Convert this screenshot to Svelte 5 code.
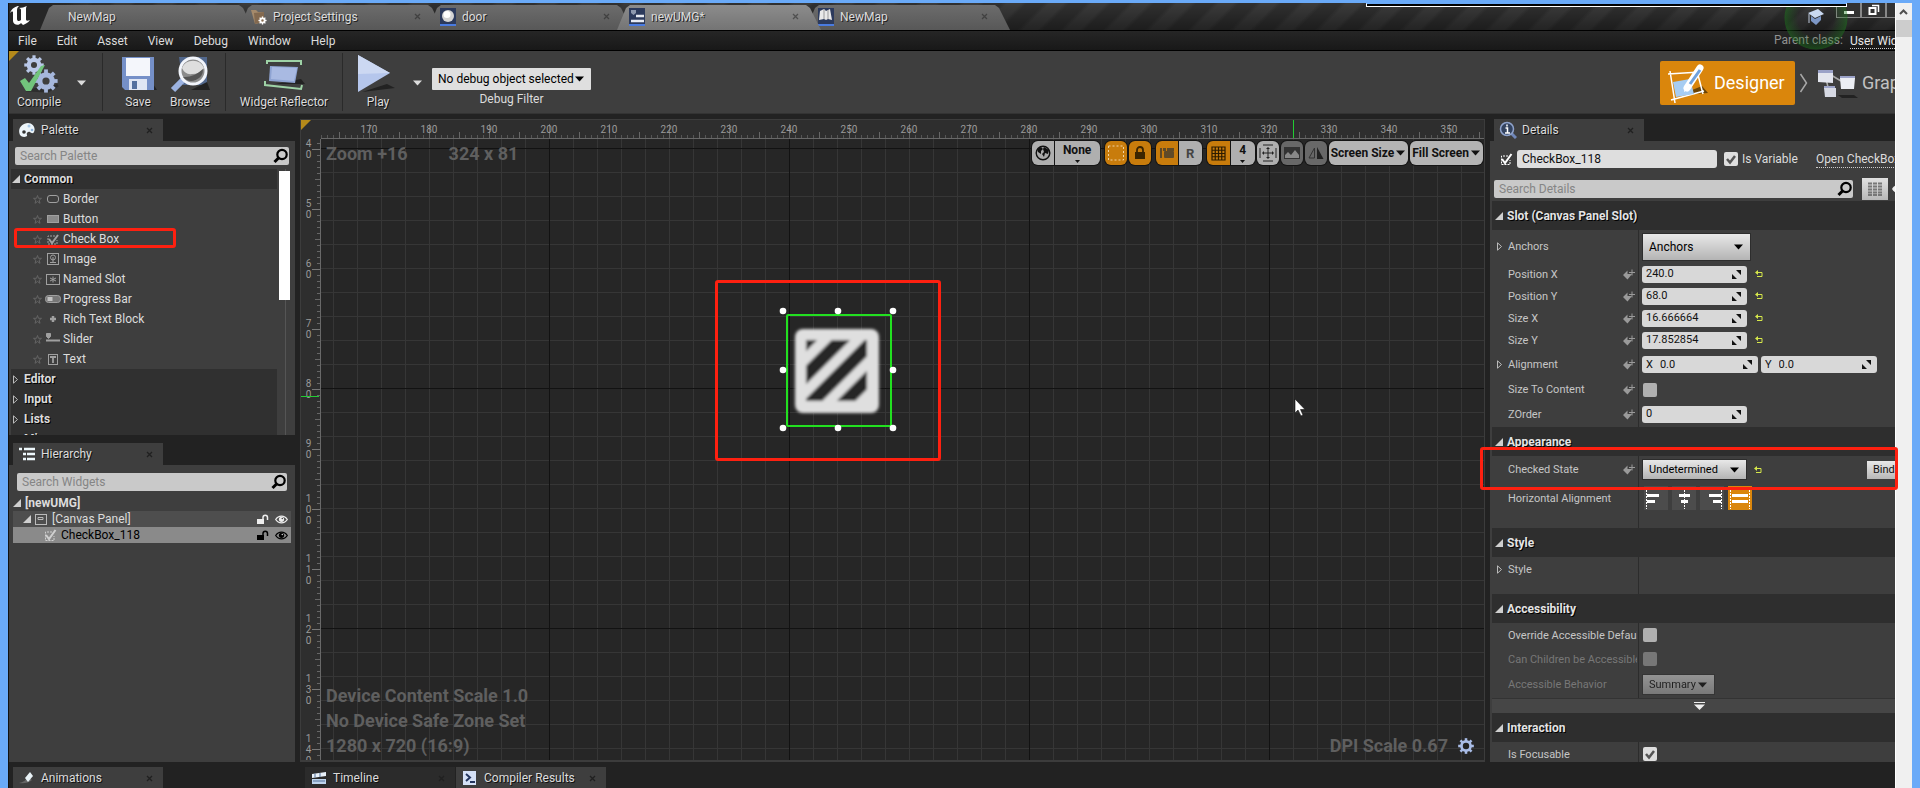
<script>
  const tabs = [
    { name: 'NewMap', icon: '' },
    { name: 'Project Settings', icon: 'settings' },
    { name: 'door', icon: 'ball' },
    { name: 'newUMG*', icon: 'umg', active: true },
    { name: 'NewMap', icon: 'map' }
  ];
  const menus = ['File', 'Edit', 'Asset', 'View', 'Debug', 'Window', 'Help'];
  const widgets = ['Border', 'Button', 'Check Box', 'Image', 'Named Slot', 'Progress Bar', 'Rich Text Block', 'Slider', 'Text'];
  const groups = ['Editor', 'Input', 'Lists', 'Misc'];
  const across = Array.from({ length: 19 }, (_, i) => 170 + i * 10);
  const down = Array.from({ length: 11 }, (_, i) => 40 + i * 10);
  const numbers = [
    { id: 'px', label: 'Position X', value: '240.0' },
    { id: 'py', label: 'Position Y', value: '68.0' },
    { id: 'sx', label: 'Size X', value: '16.666664' },
    { id: 'sy', label: 'Size Y', value: '17.852854' }
  ];
  const handles = [[4, 4], [59, 4], [114, 4], [4, 63], [114, 63], [4, 121], [59, 121], [114, 121]];
  const teeth = [0, 45, 90, 135, 180, 225, 270, 315];
</script>

{#snippet gear(cx, cy, r, fill)}
  <g {fill}>
    {#each teeth as t}
      <rect x={cx - r * 0.22} y={cy - r * 1.35} width={r * 0.44} height={r * 0.6} transform="rotate({t} {cx} {cy})" />
    {/each}
  </g>
  <circle {cx} {cy} r={r * 0.72} fill="none" stroke={fill} stroke-width={r * 0.6} />
{/snippet}

{#snippet lens()}
  <svg class="lens" width="16" height="16" viewBox="0 0 16 16" aria-hidden="true">
    <circle cx="9" cy="6.500" r="4.700" fill="none" stroke="#000" stroke-width="2.200" />
    <path d="M5.500 10 1.500 14" stroke="#000" stroke-width="3" />
  </svg>
{/snippet}

{#snippet caret()}
  <svg class="caret" width="9" height="6" viewBox="0 0 9 6" aria-hidden="true"><path d="M0 0.500h9L4.500 5.500z" fill="currentColor" /></svg>
{/snippet}

{#snippet opened()}
  <svg width="8" height="8" viewBox="0 0 8 8" aria-hidden="true"><path d="M8 0v8H0z" fill="#cfcfcf" /></svg>
{/snippet}

{#snippet closed()}
  <svg width="8" height="9" viewBox="0 0 8 9" aria-hidden="true"><path d="M1.500 .8 5.500 4.500 1.500 8.200z" fill="none" stroke="#bbb" /></svg>
{/snippet}

{#snippet close()}
  <svg class="close" width="7" height="7" viewBox="0 0 7 7" aria-hidden="true"><path d="M1 1 6 6M6 1 1 6" stroke="#202020" stroke-width="1.300" /></svg>
{/snippet}

{#snippet checkbox(color)}
  <svg width="14" height="13" viewBox="0 0 14 13" aria-hidden="true">
    <path d="M9 3H2.500v8.500H11V7" fill="none" stroke={color} stroke-dasharray="2 1" />
    <path d="M3 6 6 10 12.500 1" fill="none" stroke={color} stroke-width="2" />
  </svg>
{/snippet}

{#snippet key()}
  <svg class="key" width="12" height="11" viewBox="0 0 12 11" aria-hidden="true">
    <path d="M0 6 4.500 1.500V5H9L4.500 10.500z" fill="#9a9a9a" /><path d="M6 3.500h6M9 .5v6" stroke="#9a9a9a" />
  </svg>
{/snippet}

{#snippet spin()}
  <svg class="spin" width="9" height="9" viewBox="0 0 9 9" aria-hidden="true"><path d="M4 0h5v5zM0 4v5h5z" fill="#111" /></svg>
{/snippet}

{#snippet reset()}
  <button class="reset" aria-label="Reset to default">
    <svg width="8" height="8" viewBox="0 0 8 8" aria-hidden="true"><path d="M0 2.500 3 0v5z" fill="#d6e84a" /><path d="M2 2.500h5v4H2" fill="none" stroke="#d6e84a" /></svg>
  </button>
{/snippet}

{#snippet widgetIcon(name)}
  <svg width="18" height="14" viewBox="0 0 18 14" fill="none" stroke="#a0a0a0" aria-hidden="true">
    {#if name === 'Border'}
      <rect x="3.500" y="3.500" width="11" height="7" rx="2.500" />
    {:else if name === 'Button'}
      <rect x="3.500" y="3.500" width="11" height="7" fill="#8a8a8a" />
    {:else if name === 'Check Box'}
      <path d="M11 4H4v8h9V8" stroke-dasharray="2 1" /><path d="M5 7l3 4 6-8" stroke-width="2" />
    {:else if name === 'Image'}
      <rect x="3.500" y="1.500" width="11" height="11" /><circle cx="9" cy="5.500" r="2.500" /><path d="M9 5v6M6 10.500h6" />
    {:else if name === 'Named Slot'}
      <rect x="2.500" y="2.500" width="13" height="10" /><path d="M9 4.500v6M6 6l6 3M12 6 6 9" />
    {:else if name === 'Progress Bar'}
      <rect x="1.500" y="3.500" width="15" height="7" rx="3" fill="#777" /><path d="M3.500 7h5" stroke="#c4c4c4" stroke-width="4" />
    {:else if name === 'Rich Text Block'}
      <path d="M9 4v6M6 7h6" stroke-width="2.500" />
    {:else if name === 'Slider'}
      <path d="M2 8.500h14" stroke-width="2" /><path d="M2.500 1.500h4v3l-2 2-2-2z" fill="#a0a0a0" />
    {:else}
      <rect x="4.500" y="2.500" width="9" height="10" /><path d="M6 5h6M9 5v6" stroke-width="1.800" />
    {/if}
  </svg>
{/snippet}

{#snippet lock(color)}
  <svg class="lock" width="13" height="11" viewBox="0 0 13 11" aria-hidden="true"><path d="M1 5h7v5H1z" fill={color} /><path d="M7 6V3.500a2 2 0 0 1 4.500 0V6" fill="none" stroke={color} stroke-width="1.500" /></svg>
{/snippet}

{#snippet eye(color, pupil)}
  <svg width="13" height="9" viewBox="0 0 13 9" aria-hidden="true"><path d="M.7 4.500C3.500 0 9.500 0 12.300 4.500 9.500 9 3.500 9 .7 4.500z" fill="none" stroke={color} stroke-width="1.300" /><circle cx="6.500" cy="4.300" r="2.600" fill={color} /><circle cx="7.300" cy="3.500" r=".8" fill={pupil} /></svg>
{/snippet}

<div class="frame">
  <div class="app">
    <header class="title">
      <svg class="logo" width="24" height="22" viewBox="0 0 24 22" aria-hidden="true">
        <path d="M1 8C3 3 7 1 10 1 8 3 8 4 8 6v8c0 2 2 3 4 1V5c0-1-1-2-2-2 3 0 5-1 8-2-1 1-1 2-1 4v9c0 2 1 2 4 1-2 3-5 4-7 5l-2-2c-2 3-8 2-8-2V7C3 6 2 7 1 8z" fill="#fff" />
      </svg>
      <nav class="tabs" aria-label="Open assets">
        {#each tabs as tab}
          <a class="tab" class:active={tab.active} class:wide={!tab.icon} href="#tab">
            {#if tab.icon}
              <svg width="18" height="18" viewBox="0 0 18 18" aria-hidden="true">
                {#if tab.icon === 'settings'}
                  <path d="M1 2h5l2 2h6v10L5 16z" fill="#a58a6b" /><path d="M4 5 14 4v9l-9 3z" fill="#83694f" />
                  {@render gear(12.5, 12.5, 3, '#fff')}
                {:else}
                  <rect x="1" width="16" height="16" fill="#2c3a5c" /><path d="M1 17h16" stroke="#4a7be0" stroke-width="2" />
                  {#if tab.icon === 'ball'}
                    <circle cx="9" cy="8" r="6" fill="#d4d4d4" /><circle cx="8" cy="6.500" r="3.500" fill="#fff" />
                  {:else if tab.icon === 'umg'}
                    <path d="M3 2h5v3L5.500 7 3 5z" fill="#8d98ae" /><path d="M8 8h8M3 13h13" stroke="#e6eaf2" stroke-width="2.500" />
                  {:else}
                    <path d="M3 3l4-2 2 2 4-2 2 11-4-1-2 1-2-1-5 1z" fill="#e9e9e9" /><path d="M7 1v10M11 2v9" stroke="#999" />
                  {/if}
                {/if}
              </svg>
            {/if}
            <span>{tab.name}</span>
            {#if tab.icon}{@render close()}{/if}
          </a>
        {/each}
      </nav>
      <div class="windowbuttons">
        <button aria-label="Minimize"><svg width="24" height="15" viewBox="0 0 24 15"><path d="M7 9.500h10" stroke="#fff" stroke-width="3" /></svg></button>
        <button aria-label="Restore"><svg width="24" height="15" viewBox="0 0 24 15" fill="none" stroke="#fff"><path d="M10 2.500h6.500V9" stroke-width="1.500" /><rect x="7.500" y="5" width="6" height="6" stroke-width="2" /></svg></button>
        <button aria-label="Close"></button>
      </div>
    </header>

    <nav class="menu" aria-label="Main menu">
      {#each menus as m}<button>{m}</button>{/each}
      <div class="parent"><span>Parent class:</span><a href="#class">User Widget</a></div>
    </nav>

    <div class="glow">
      <svg width="20" height="20" viewBox="0 0 20 20" aria-hidden="true"><path d="M2 6 12 2l6 5-9 4z" fill="#c9d8f0" /><path d="M5 9v5l5 4 5-5V9l-6 3z" fill="#7d97c6" /><path d="M3 7v9" stroke="#bcc7da" /></svg>
    </div>
    <div class="remote"></div>

    <div class="toolbar">
      <button class="tool compile">
        <svg width="42" height="40" viewBox="0 0 42 40" aria-hidden="true">
          <path d="M8 36 30 37 40 31" stroke="#222" stroke-width="3" opacity=".6" />
          {@render gear(16, 11, 7.2, '#b9c8e8')}{@render gear(28, 27, 8.6, '#a6b7dc')}
          <path d="M2 27 7 24 11 29 23 12l4-1L13 37H8z" fill="#72c47c" />
        </svg>
        Compile
      </button>
      <button class="drop" aria-label="Compile options">{@render caret()}</button>
      <i class="sep"></i>
      <button class="tool">
        <svg width="42" height="40" viewBox="0 0 42 40" aria-hidden="true">
          <path d="M36 30l4 6H10z" fill="#222" /><path d="M5 3h32v33H8l-3-3z" fill="#7590c8" /><rect x="9" y="4" width="24" height="18" fill="#f4f6fb" /><path d="M12 25h18v11H12z" fill="#dfe6f4" /><rect x="15" y="27" width="5" height="8" fill="#54709f" />
        </svg>
        Save
      </button>
      <button class="tool">
        <svg width="42" height="40" viewBox="0 0 42 40" aria-hidden="true">
          <path d="M10 3h28v28H14z" fill="#52688d" /><path d="M38 28l3 8H22z" fill="#222" /><path d="M14 26 4 36" stroke="#9bb2e0" stroke-width="6" /><circle cx="24" cy="17" r="13" fill="#8c8c8c" stroke="#f2f5fb" stroke-width="3" /><path d="M13 14a12 12 0 0 1 22 0q-4 6-12 6-7 1-10-6z" fill="#dedede" /><path d="M14 23q10 1 20-8a11.500 11.500 0 0 1-20 8z" fill="#555" />
        </svg>
        Browse
      </button>
      <i class="sep"></i>
      <button class="tool reflector">
        <svg width="42" height="40" viewBox="0 0 42 40" aria-hidden="true">
          <path d="M12 30h30l-4-5z" fill="#222" /><path d="M7 12 35 13 32 29 6 27z" fill="#8ea3d2" /><path d="M9 13 34 14 31 27 8 25z" fill="#a9bae2" /><path d="M4 10V7h34v4M2 27v4l36 4 1-4" fill="none" stroke="#9ed2a6" stroke-width="2" />
        </svg>
        Widget Reflector
      </button>
      <i class="sep"></i>
      <button class="tool play">
        <svg width="42" height="40" viewBox="0 0 42 40" aria-hidden="true"><path d="M5 38 38 34 30 30z" fill="#222" /><path d="M1 1 33 19 1 38z" fill="#b5c6ec" /><path d="M1 1 33 19 1 20z" fill="#ccd8f2" /></svg>
        Play
      </button>
      <button class="drop" aria-label="Play options">{@render caret()}</button>
      <div class="debug">
        <div class="pick"><select id="debug"><option>No debug object selected</option></select>{@render caret()}</div>
        <label for="debug">Debug Filter</label>
      </div>
      <div class="modes">
        <button class="designer">
          <svg width="42" height="42" viewBox="0 0 42 42" aria-hidden="true">
            <path d="M14 33 42 31 36 24z" fill="#6b4406" /><path d="M2 12 34 10M4 9 9 41M31 9 37 32M5 38 38 29" stroke="#fff" stroke-width="1.500" /><path d="M7 20 24 17 28 32 10 35z" fill="#a7cdf2" /><path d="M21 26 34 6" stroke="#fff" stroke-width="7" stroke-linecap="round" /><path d="M24 22 34 8" stroke="#6fa1dc" stroke-width="3" /><path d="M18 30l1-7 6 3z" fill="#fff" />
          </svg>
          Designer
        </button>
        <svg width="10" height="20" viewBox="0 0 10 20" aria-hidden="true"><path d="M1.500 1 7.500 10 1.500 19" fill="none" stroke="#a8a8a8" stroke-width="1.500" /></svg>
        <button class="graph">
          <svg width="42" height="32" viewBox="0 0 42 32" aria-hidden="true">
            <path d="M22 28h16l4 3H26z" fill="#222" /><path d="M15 8 25 14M10 12 12 20" stroke="#aaa" stroke-width="1.500" /><path d="M2 3 17 4 17 16 2 15z" fill="#e3e5ee" /><path d="M2 3h15v3H2zM24 9h15v3H24zM8 19h11v3H8z" fill="#9ba2c8" /><path d="M24 11h15l-1 11H25z" fill="#eceef4" /><path d="M8 21h12v9H9z" fill="#d6d9e3" />
          </svg>
          Graph
        </button>
      </div>
    </div>

    <main class="body">
      <div class="left">
        <section class="dock palette">
          <div class="docktab">
            <svg width="18" height="16" viewBox="0 0 18 16" aria-hidden="true"><path d="M2 13C-1 7 4 1 10 1c5 0 8 5 6 9-1 2-3 1-4 0-2-1-4 1-3 3s-5 3-7 0z" fill="#edf5fa" /><circle cx="6" cy="10" r="1.800" fill="#333" /><circle cx="11" cy="4" r="1.500" fill="#a8c9e8" /><circle cx="14" cy="8" r="1.300" fill="#8fb4dd" /></svg>
            <span>Palette</span>{@render close()}
          </div>
          <div class="panel">
            <div class="search"><input type="text" aria-label="Search Palette" placeholder="Search Palette" />{@render lens()}</div>
            <div class="scroller">
              <div class="list">
                <button class="group lit">{@render opened()}Common</button>
                {#each widgets as w}
                  <div class="item">
                    <svg width="9" height="9" viewBox="0 0 9 9" aria-hidden="true"><path d="M4.500 .5 5.500 3.300H8.500L6.200 5.200 7 8.300 4.500 6.500 2 8.300 2.800 5.200 .5 3.300H3.500z" fill="none" stroke="#646464" /></svg>
                    {@render widgetIcon(w)}<span>{w}</span>
                    {#if w === 'Check Box'}<div class="mark"></div>{/if}
                  </div>
                {/each}
                {#each groups as g}<button class="group">{@render closed()}{g}</button>{/each}
              </div>
              <div class="bar"><i></i></div>
            </div>
          </div>
        </section>
        <section class="dock hierarchy">
          <div class="docktab">
            <svg width="18" height="16" viewBox="0 0 18 16" aria-hidden="true"><path d="M1 3h3M6 3h11M5 8h3M9 8h8M5 13h3M9 13h8" stroke="#eef8fc" stroke-width="2.500" /></svg>
            <span>Hierarchy</span>{@render close()}
          </div>
          <div class="panel">
            <div class="search"><input type="text" aria-label="Search Widgets" placeholder="Search Widgets" />{@render lens()}</div>
            <div class="tree">
              <div class="node root">{@render opened()}<b>[newUMG]</b></div>
              <div class="node canvasnode">
                {@render opened()}
                <svg width="13" height="13" viewBox="0 0 13 13" fill="none" stroke="#bbb" aria-hidden="true"><rect x=".5" y="1.500" width="11" height="10" /><path d="M3 4.500h5v2H3z" /></svg>
                <span>[Canvas Panel]</span>{@render lock('#eee')}{@render eye('#eee', '#444')}
              </div>
              <div class="node selected">{@render checkbox('#d0d0d0')}<span>CheckBox_118</span>{@render lock('#000')}{@render eye('#000', '#ccc')}</div>
            </div>
          </div>
        </section>
      </div>

      <section class="viewport">
        <div class="corner"></div>
        <div class="ruler top">
          {#each across as n}<span>{n}</span>{/each}
          <i class="at x"></i>
        </div>
        <div class="ruler side">
          {#each down as n}<span>{#each String(n).split('') as d}<em>{d}</em>{/each}</span>{/each}
          <i class="at y"></i>
        </div>
        <div class="surface">
          <div class="overlaybar">
            <div class="readout"><span>Zoom +16</span><span>324 x 81</span></div>
            <div class="pills">
              <button class="pill globe" aria-label="Localization"><svg width="16" height="16" viewBox="0 0 16 16"><circle cx="8" cy="8" r="6.800" fill="#aaa" stroke="#111" stroke-width="1.400" /><path d="M2 4l4-2 2 2-2 2v3L3 7zM9 2l5 3-1 4-3-1-1 4-2-3 2-2-1-3z" fill="#111" /></svg></button>
              <button class="pill none">None<svg width="5" height="3" viewBox="0 0 5 3"><path d="M0 0h5L2.500 3z" fill="#111" /></svg></button>
              <button class="pill on" aria-label="Show outlines"><svg width="18" height="18" viewBox="0 0 18 18"><rect x="1.500" y="2" width="15" height="14" fill="none" stroke="#f1d3a3" stroke-dasharray="2 2" /></svg></button>
              <button class="pill on" aria-label="Respect locks"><svg width="16" height="16" viewBox="0 0 16 16"><rect x="3" y="7" width="10" height="7" fill="#3b2500" /><path d="M5 8V5a3 3 0 0 1 6 0v3" fill="none" stroke="#3b2500" stroke-width="1.800" /></svg></button>
              <button class="pill on joinl" aria-label="Layout mode"><svg width="16" height="14" viewBox="0 0 16 14" fill="#5f4a28"><path d="M1 2h2v10H1zM4 2h3v3H4z" /><rect x="5" y="5" width="10" height="7" rx="1" /><path d="M8 2h7v3H8z" /></svg></button>
              <button class="pill joinr big">R</button>
              <button class="pill on joinl" aria-label="Grid snap"><svg width="15" height="15" viewBox="0 0 15 15"><path d="M1 1h13v13H1zM4.250 1v13M7.500 1v13M10.750 1v13M1 4.250h13M1 7.500h13M1 10.750h13" fill="none" stroke="#2d1c00" stroke-width="1.200" /></svg></button>
              <button class="pill joinr none four">4<svg width="5" height="3" viewBox="0 0 5 3"><path d="M0 0h5L2.500 3z" fill="#111" /></svg></button>
              <button class="pill" aria-label="Zoom to fit"><svg width="18" height="18" viewBox="0 0 18 18" fill="none" stroke="#222"><path d="M9 4v10M4 9h10M1 4v10M17 4v10M4 1h10M4 17h10" /><path d="M9 3l2 2H7zM9 15l2-2H7zM3 9l2-2v4zM15 9l-2-2v4z" fill="#222" stroke="none" /></svg></button>
              <button class="pill off" aria-label="Preview background"><svg width="16" height="12" viewBox="0 0 16 12"><path d="M0 0h16v12H0z" fill="#333" /><path d="M1 11V8l3-3 3 3 4-5 4 5v3z" fill="#888" /></svg></button>
              <button class="pill off" aria-label="Flip direction"><svg width="16" height="14" viewBox="0 0 16 14"><path d="M6.500 2v10H1z" fill="none" stroke="#333" /><path d="M9 1v12h6.500z" fill="#222" /></svg></button>
              <button class="pill text">Screen Size{@render caret()}</button>
              <button class="pill text">Fill Screen{@render caret()}</button>
            </div>
          </div>
          <div class="info">
            <div><p>Device Content Scale 1.0</p><p>No Device Safe Zone Set</p><p>1280 x 720 (16:9)</p></div>
            <div class="dpi"><p>DPI Scale 0.67</p><svg width="18" height="18" viewBox="0 0 18 18" aria-hidden="true">{@render gear(9, 9, 5.8, '#a9bce6')}<circle cx="9" cy="9" r="3.200" fill="#222" /></svg></div>
          </div>
          <svg class="selection" width="118" height="125" viewBox="0 0 118 125" aria-hidden="true">
            <defs>
              <filter id="soft"><feGaussianBlur stdDeviation="1.500" /></filter>
              <clipPath id="inner"><rect x="27" y="33" width="61" height="61" /></clipPath>
            </defs>
            <g filter="url(#soft)">
              <rect x="16" y="22" width="84" height="84" rx="8" fill="#dfdfdf" />
              <g clip-path="url(#inner)" stroke="#262626" stroke-width="13">
                <path d="M17 45 39 23M17 78 72 23M17 111 105 23M17 144 138 23" />
              </g>
            </g>
            <rect x="8" y="8" width="104" height="111" rx="1" fill="none" stroke="#22e020" stroke-width="2" />
            {#each handles as [x, y]}<circle cx={x} cy={y} r="3.300" fill="#fff" />{/each}
          </svg>
          <div class="mark stage"></div>
          <svg class="cursor" width="12" height="19" viewBox="0 0 12 19" aria-hidden="true"><path d="M1 1v14l3-3 3 6 2-1-2.500-5.500H11z" fill="#fff" stroke="#111" stroke-width=".6" /></svg>
        </div>
      </section>

      <section class="dock details">
        <div class="docktab">
          <svg width="18" height="18" viewBox="0 0 18 18" aria-hidden="true"><path d="M12 12l5 5" stroke="#6f86b8" stroke-width="3" /><circle cx="8" cy="8" r="6.500" fill="#33435f" stroke="#8fa3cc" stroke-width="1.500" /><path d="M8 3.500v2M6.500 7H8.500v5M6 12h5" stroke="#fff" stroke-width="1.500" fill="none" /></svg>
          <span>Details</span>{@render close()}
        </div>
        <div class="panel">
          <div class="name">
            {@render checkbox('#fff')}
            <input type="text" aria-label="Widget name" value="CheckBox_118" />
            <input type="checkbox" id="isvar" checked /><label for="isvar">Is Variable</label>
            <a href="#open">Open CheckBox</a>
          </div>
          <div class="find">
            <div class="search"><input type="text" aria-label="Search Details" placeholder="Search Details" />{@render lens()}</div>
            <button class="matrix" aria-label="Property matrix"><svg width="14" height="14" viewBox="0 0 14 14"><path d="M0 1.500h14M0 4.500h14M0 7.500h14M0 10.500h14M0 13h14" stroke="#777" stroke-width="2" stroke-dasharray="4 1" /></svg></button>
            <button class="view" aria-label="View options"><svg width="16" height="10" viewBox="0 0 16 10"><path d="M0 5c3-6 13-6 16 0-3 6-13 6-16 0z" fill="#eee" /></svg></button>
          </div>
          <div class="props">
            <h2>{@render opened()}Slot (Canvas Panel Slot)</h2>
            <div class="row anchors"><span class="exp">{@render closed()}</span><label for="anchors">Anchors</label><div class="val"><div class="pick light tall"><select id="anchors"><option>Anchors</option></select>{@render caret()}</div></div></div>
            {#each numbers as n}
              <div class="row num"><label for={n.id}>{n.label}</label>{@render key()}<div class="val"><div class="field"><input id={n.id} type="text" value={n.value} />{@render spin()}</div>{@render reset()}</div></div>
            {/each}
            <div class="row pair"><span class="exp">{@render closed()}</span><label for="ax">Alignment</label>{@render key()}<div class="val">
              <div class="field long"><label for="ax">X</label><input id="ax" type="text" value="0.0" />{@render spin()}</div>
              <div class="field long"><label for="ay">Y</label><input id="ay" type="text" value="0.0" />{@render spin()}</div>
            </div></div>
            <div class="row fit"><label for="stc">Size To Content</label>{@render key()}<div class="val"><input type="checkbox" id="stc" /></div></div>
            <div class="row order"><label for="zo">ZOrder</label>{@render key()}<div class="val"><div class="field"><input id="zo" type="text" value="0" />{@render spin()}</div></div></div>

            <h2>{@render opened()}Appearance</h2>
            <div class="row pair"><label for="state">Checked State</label>{@render key()}<div class="val"><div class="pick light state"><select id="state"><option>Undetermined</option></select>{@render caret()}</div>{@render reset()}<button class="bind">Bind</button></div></div>
            <div class="row halign"><span class="lab">Horizontal Alignment</span><div class="val">
              <button aria-label="Left"><svg width="24" height="24" viewBox="0 0 24 24" stroke="#fff"><path d="M2.500 1v22" stroke-dasharray="2 1" /><path d="M3 9.500h12M3 15.500h8" stroke-width="3" /></svg></button>
              <button aria-label="Center"><svg width="24" height="24" viewBox="0 0 24 24" stroke="#fff"><path d="M12.500 1v22" stroke-dasharray="2 1" /><path d="M7 9.500h11M9 15.500h7" stroke-width="3" /></svg></button>
              <button aria-label="Right"><svg width="24" height="24" viewBox="0 0 24 24" stroke="#fff"><path d="M21.500 1v22" stroke-dasharray="2 1" /><path d="M9 9.500h12M13 15.500h8" stroke-width="3" /></svg></button>
              <button class="on" aria-label="Fill"><svg width="24" height="24" viewBox="0 0 24 24" stroke="#fff"><path d="M2.500 1v22M21.500 1v22" stroke-dasharray="2 1" /><path d="M4 9.500h16M4 15.500h16" stroke-width="3" /></svg></button>
            </div></div>

            <h2>{@render opened()}Style</h2>
            <div class="row styled"><span class="exp">{@render closed()}</span><span class="lab">Style</span><div class="val"></div></div>

            <h2>{@render opened()}Accessibility</h2>
            <div class="row"><label for="oad">Override Accessible Defaults</label><div class="val"><input type="checkbox" id="oad" /></div></div>
            <div class="row dim"><label for="ccb">Can Children be Accessible</label><div class="val"><input type="checkbox" id="ccb" disabled /></div></div>
            <div class="row dim pair"><label for="beh">Accessible Behavior</label><div class="val"><div class="pick light beh"><select id="beh" disabled><option>Summary</option></select>{@render caret()}</div></div></div>
            <button class="more" aria-label="Show advanced"><svg width="11" height="8" viewBox="0 0 11 8"><path d="M0 .5h11" stroke="#eee" /><path d="M0 2.500h11L5.500 8z" fill="#eee" /></svg></button>

            <h2>{@render opened()}Interaction</h2>
            <div class="row"><label for="foc">Is Focusable</label><div class="val"><input type="checkbox" id="foc" checked /></div></div>
          </div>
        </div>
      </section>
    </main>

    <footer>
      <div class="docktab anim"><svg width="18" height="14" viewBox="0 0 18 14" aria-hidden="true"><path d="M1 12q6-1 9-6l4 3q-5 4-13 3z" fill="#666" /><path d="M7 7 12 1l3 4-5 6z" fill="#e8f2f6" /></svg><span>Animations</span>{@render close()}</div>
      <div class="docktab time"><svg width="18" height="14" viewBox="0 0 18 14" aria-hidden="true"><path d="M2 3 16 1v4L2 7z" fill="#e8f1fa" /><path d="M2 8h14v5H2z" fill="#bcd3ec" /><path d="M5 2.500v4M10 2v4M3 10h12" stroke="#547199" /></svg><span>Timeline</span>{@render close()}</div>
      <div class="docktab"><svg width="18" height="16" viewBox="0 0 18 16" aria-hidden="true"><path d="M2 1h13v14H2z" fill="#d5e1f7" /><path d="M5 4l4 3.500L5 11M9 12h5" fill="none" stroke="#24355f" stroke-width="2" /></svg><span>Compiler Results</span>{@render close()}</div>
    </footer>
    <div class="mark checked"></div>
  </div>
  <div class="pagebar"><svg width="15" height="17" viewBox="0 0 15 17" aria-hidden="true"><path d="M4 11 7.500 7.500 11 11" fill="none" stroke="#505050" stroke-width="2" /></svg><i></i></div>
</div>

<style>
  :global(body) { background: #6aaaf8; }
  * { box-sizing: border-box; }
  button, input, select { font: inherit; color: inherit; border: 0; margin: 0; padding: 0; background: none; border-radius: 0; }
  button { display: flex; align-items: center; }
  a { color: inherit; text-decoration: none; }
  svg { flex: none; display: block; }
  p, h2 { margin: 0; }
  .frame { height: 100vh; display: flex; padding: 3px 8px 0 8px; background: #6aaaf8; font: 12px/16px Roboto, sans-serif; color: #dcdcdc; overflow: hidden; }
  .app { position: relative; flex: 1; min-width: 0; display: grid; grid-template-rows: 28px 20px 63px 5px minmax(0, 1fr) 5px 21px; background: #222; border-left: 1px solid #111; }
  .pagebar { width: 17px; background: #f0f0f0; border-left: 1px solid #fff; }
  .pagebar i { display: block; height: 17px; background: #cdcdcd; }

  .title { display: flex; background: linear-gradient(90deg, #262626 40px, transparent 90px), linear-gradient(transparent, #0006), repeating-linear-gradient(135deg, #303030 0 12px, #3b3b3b 16px 26px, #303030 30px); border-bottom: 1px solid #000; overflow: hidden; }
  .logo { margin: 2px 13px 0 0; }
  .tabs { display: flex; }
  .tab { position: relative; width: 189px; height: 27px; display: flex; align-items: center; gap: 5px; padding: 0 13px 0 5px; text-shadow: 1px 1px #222; isolation: isolate; }
  .tab.wide { width: 199px; padding-left: 22px; }
  .tab span { flex: 1; }
  .tab::before { content: ''; position: absolute; z-index: -1; inset: 2px -9px 0 -6px; background: linear-gradient(#6c6c6c, #585858); clip-path: polygon(13px 0, calc(100% - 15px) 0, calc(100% - 11px) 3px, 100% 100%, 0 100%, 9px 3px); }
  .tab.active { z-index: 1; }
  .tab.active::before { background: linear-gradient(#8c8c8c, #747474); }
  .tab .close { opacity: .5; }
  .windowbuttons { margin-left: auto; width: 59px; display: flex; overflow: hidden; }
  .windowbuttons button { flex: none; width: 25px; height: 15px; background: #333; border: 1px solid #888; border-top: 0; }
  .menu { display: flex; align-items: center; padding-left: 9px; gap: 20px; background: linear-gradient(#262626, #181818); border-bottom: 1px solid #000; }
  .parent { margin-left: auto; width: 121px; display: flex; gap: 7px; overflow: hidden; white-space: nowrap; color: #919191; }
  .parent a { color: #e8e8e8; border-bottom: 1px dotted #ccc; line-height: 14px; margin-top: 2px; }
  .glow { position: absolute; top: 0; right: 47px; width: 64px; height: 47px; display: grid; place-items: start center; padding-top: 4px; border-radius: 0 0 32px 32px; background: radial-gradient(circle at 50% 15px, transparent 18px, #1c7a1c55 28px, #1c7a1c77 31px, transparent 32px); }
  .remote { position: absolute; top: 0; right: 48px; width: 481px; height: 4px; background: #000; border: 1px solid #fff; border-top-color: #6aaaf8; }

  .toolbar { display: flex; background: #3e3e3e; overflow: hidden; border-bottom: 1px solid #333; position: relative; }
  .toolbar::before, .corner::before { content: ''; position: absolute; top: 0; left: 0; border: 5px solid; border-color: #b58a1a transparent transparent #b58a1a; }
  .tool { width: 52px; flex-direction: column; padding-top: 3px; text-shadow: 1px 1px #111; white-space: nowrap; }
  .tool.compile { width: 60px; }
  .tool.reflector { width: 98px; }
  .tool.play { width: 52px; }
  .drop { width: 26px; justify-content: center; padding-top: 2px; }
  .compile + .drop { width: 24px; }
  .sep { width: 1px; margin: 2px 9px; background: #2a2a2a; }
  .pick { display: grid; align-items: center; }
  .pick > :global(*) { grid-area: 1 / 1; }
  .pick .caret { justify-self: end; margin-right: 7px; pointer-events: none; color: #000; }
  .pick select { appearance: none; width: 100%; height: 100%; padding-left: 6px; color: #000; opacity: 1; }
  .debug { display: grid; grid-template-rows: 22px 18px; justify-items: center; align-content: start; align-items: center; padding: 17px 0 0 2px; }
  .debug .pick { width: 159px; height: 22px; background: #dfdfdf; border-radius: 1px; }
  .modes { margin-left: auto; width: 235px; display: flex; align-items: center; padding-top: 2px; overflow: hidden; font-size: 18px; color: #c2c2c2; }
  .designer { flex: none; width: 135px; height: 44px; gap: 6px; padding-left: 6px; margin-right: 4px; background: #da860c; color: #fff; border-radius: 2px; }
  .graph { gap: 4px; margin-left: 7px; }

  .body { display: grid; grid-template-columns: 286px minmax(0, 1fr) 405px; column-gap: 5px; grid-row: 5; min-height: 0; }
  .left { display: grid; grid-template-rows: 318px minmax(0, 1fr); row-gap: 6px; min-height: 0; }
  .dock { display: flex; flex-direction: column; min-height: 0; min-width: 0; }
  .docktab { width: 150px; height: 22px; flex: none; margin-left: 4px; display: flex; align-items: center; gap: 5px; padding: 0 10px 0 5px; background: #3e3e3e; text-shadow: 1px 1px #111; }
  .docktab span { flex: 1; }
  .panel { flex: 1; min-height: 0; background: #3e3e3e; overflow: hidden; display: flex; flex-direction: column; }
  .search { display: flex; align-items: center; height: 18px; background: #c9c9c9; border-radius: 2px; }
  .search input { flex: 1; min-width: 0; padding-left: 5px; color: #222; }
  .search input::placeholder { color: #858585; opacity: 1; }
  .palette .search { margin: 6px 6px 4px 6px; flex: none; }
  .scroller { flex: 1; min-height: 0; display: flex; padding: 0 5px 0 2px; border-bottom: 2px solid #222; }
  .list { flex: 1; overflow: hidden; }
  .group { width: 100%; height: 20px; gap: 4px; padding-left: 1px; background: #303030; font-weight: 700; text-shadow: 1px 1px #000; }
  .item { position: relative; height: 20px; display: flex; align-items: center; padding-left: 22px; }
  .item > span { margin-left: 1px; }
  .item > svg + svg { margin-left: 2px; }
  .bar { width: 11px; margin-left: 2px; background: linear-gradient(#555, #555) 6px 0 / 1px 100% no-repeat; }
  .bar i { display: block; height: 129px; margin-top: 2px; background: #fff; }
  .mark { position: absolute; border: 3px solid #fe2010; border-radius: 3px; pointer-events: none; }
  .item .mark { left: 3px; top: -1px; width: 162px; height: 20px; }
  .hierarchy .search { margin: 8px 8px 4px 8px; flex: none; }
  .node { height: 16px; display: flex; align-items: center; gap: 4px; margin: 0 4px; padding-right: 3px; }
  .node span { flex: 1; }
  .node > .lock { margin-right: 2px; }
  .node.canvasnode { background: #4e4e4e; padding-left: 10px; }
  .node.selected { background: #8a8a8a; color: #000; padding-left: 30px; }

  .viewport { display: grid; grid-template: 19px minmax(0, 1fr) / 20px minmax(0, 1fr); border: 1px solid #3c3c3c; border-width: 1px 1px 2px 1px; background: #2e2e2e; min-height: 0; }
  .corner { position: relative; }
  .ruler { position: relative; overflow: hidden; font-size: 10px; line-height: 11px; color: #9a9a9a; display: flex; }
  .ruler span { flex: none; display: flex; align-items: center; justify-content: center; }
  .ruler em { font-style: normal; display: block; height: 11px; }
  .top { padding-left: 18px; background: linear-gradient(90deg, #666 1px, transparent 1px) 48px 100% / 60px 14px repeat-x, linear-gradient(90deg, #666 1px, transparent 1px) 18px 100% / 60px 6px repeat-x, linear-gradient(90deg, #555 1px, transparent 1px) 0 100% / 6px 3px repeat-x; border-bottom: 1px solid #686868; }
  .top span { width: 60px; height: 18px; }
  .side { flex-direction: column; border-right: 1px solid #686868; background: linear-gradient(#777 1px, transparent 1px) 100% 10px / 8px 60px repeat-y, linear-gradient(#666 1px, transparent 1px) 100% 40px / 5px 60px repeat-y, linear-gradient(#666 1px, transparent 1px) 100% 4px / 3px 6px repeat-y; }
  .side span { height: 60px; flex-direction: column; padding-right: 4px; }
  .side span:first-child { margin-top: -20px; }
  .at { position: absolute; background: #22cc33; }
  .at.x { left: 972px; top: 0; width: 1px; height: 18px; }
  .at.y { top: 257px; left: 0; width: 18px; height: 1px; }
  .surface { position: relative; overflow: hidden; display: flex; flex-direction: column; justify-content: space-between; background: linear-gradient(90deg, #121212 1px, transparent 1px) 228px 0 / 240px 100%, linear-gradient(#121212 1px, transparent 1px) 0 9px / 100% 240px, linear-gradient(90deg, #363636 1px, transparent 1px) 12px 0 / 24px 100%, linear-gradient(#363636 1px, transparent 1px) 0 9px / 100% 24px, #262626; }
  .overlaybar { display: flex; justify-content: space-between; padding: 2px 1px 0 5px; }
  .readout { display: flex; gap: 41px; padding-top: 3px; font-size: 18px; line-height: 20px; font-weight: 700; color: #5f5f5f; }
  .info { display: flex; justify-content: space-between; align-items: end; padding: 0 9px 2px 5px; font-size: 18px; line-height: 25px; font-weight: 700; color: #5f5f5f; }
  .dpi { display: flex; gap: 9px; align-items: center; }
  .pills { display: flex; gap: 2px; height: 24px; }
  .pill { min-width: 22px; height: 24px; justify-content: center; border-radius: 6px; background: #afafaf; color: #111; font-weight: 700; line-height: 13px; box-shadow: 0 0 0 1px #151515; flex: none; }
  .pill.globe { border-radius: 6px 0 0 6px; margin-right: -1px; }
  .pill.none { width: 45px; flex-direction: column; gap: 3px; border-radius: 0 6px 6px 0; margin-right: 3px; }
  .pill.none.four { width: 24px; margin-right: 0; }
  .pill.on { background: #c87c0c; }
  .pill.off { background: #686868; }
  .pill.joinl { border-radius: 6px 0 0 6px; margin: 0 -2px 0 3px; width: 23px; }
  .pill.joinr { border-radius: 0 6px 6px 0; }
  .pill.big { width: 23px; color: #444; font-size: 13px; }
  .big + .joinl { margin-left: 3px; margin-right: -1px; }
  .pill.text { padding: 0 3px 0 2px; gap: 2px; background: #b4b4b4; }
  .selection { position: absolute; left: 458px; top: 168px; }
  .stage { left: 394px; top: 141px; width: 226px; height: 181px; }
  .cursor { position: absolute; left: 973px; top: 259px; }

  .details .panel { white-space: nowrap; }
  .name { display: flex; align-items: center; height: 36px; padding-left: 9px; flex: none; }
  .name > * { flex: none; }
  .name input[type='text'] { width: 200px; height: 18px; margin: 0 7px 0 4px; padding-left: 5px; background: #dedede; color: #111; border-radius: 3px; }
  .name label { margin: 0 18px 0 4px; }
  .name a { border-bottom: 1px dotted #ccc; }
  .find { display: flex; align-items: center; height: 24px; flex: none; padding-left: 4px; }
  .find .search { width: 359px; flex: none; }
  .matrix { width: 26px; height: 22px; margin: 0 4px 0 9px; justify-content: center; background: linear-gradient(#e0e0e0, #b8b8b8); flex: none; }
  .props { flex: 1; min-height: 0; overflow: hidden; margin-left: 2px; font-size: 11px; background: linear-gradient(#2c2c2c, #2c2c2c) 146px 0 / 1px 100% no-repeat; }
  h2 { height: 29px; display: flex; align-items: center; gap: 4px; padding-left: 3px; font-size: 12px; font-weight: 700; color: #e4e4e4; background: #2e2e2e; text-shadow: 1px 1px #000; }
  .row { position: relative; height: 24px; display: grid; grid-template-columns: 16px 129px 1fr; align-items: center; color: #c6c6c6; }
  .exp { grid-area: 1 / 1; padding-left: 4px; }
  .row > label, .lab { grid-area: 1 / 2; overflow: hidden; padding-top: 1px; }
  .row > :global(.key) { grid-area: 1 / 2; justify-self: end; margin-right: 2px; }
  .val { grid-area: 1 / 3; display: flex; align-items: center; gap: 3px; padding-left: 5px; color: #111; }
  .anchors { height: 33px; }
  .num { height: 22px; }
  .pair { height: 27px; }
  .fit { height: 23px; }
  .order { height: 26px; }
  .field { width: 105px; height: 17px; display: flex; align-items: center; padding: 0 6px 0 4px; background: #d8d8d8; border-radius: 3px; }
  .field.long { width: 116px; }
  .field input { flex: 1; min-width: 0; }
  .field label { margin-right: 7px; }
  .reset { width: 18px; justify-content: center; flex: none; }
  input[type='checkbox'] { appearance: none; width: 14px; height: 14px; flex: none; margin: 0; background: #b0b0b0; border-radius: 2px; }
  .val input[type='checkbox'] { margin-left: 1px; }
  input[type='checkbox']:checked { background: #dedede url("data:image/svg+xml,%3Csvg xmlns='http://www.w3.org/2000/svg' viewBox='0 0 14 14'%3E%3Cpath d='M3 7l3 3.500 5-6.500' fill='none' stroke='%23555' stroke-width='2.500'/%3E%3C/svg%3E"); }
  .pick.light { margin-left: 1px; background: linear-gradient(#e8e8e8, #b4b4b4); box-shadow: 0 0 0 1px #0004; }
  .tall { width: 107px; height: 26px; font-size: 12px; }
  .state { width: 103px; height: 19px; }
  .beh { width: 71px; height: 19px; }
  .bind { width: 40px; height: 18px; margin: 0 -12px 0 auto; padding-left: 6px; background: linear-gradient(#e8e8e8, #b8b8b8); flex: none; }
  .halign { height: 30px; margin-bottom: 15px; }
  .halign .val { gap: 4px; padding-left: 7px; }
  .halign button { width: 24px; height: 24px; background: #4c4c4c; }
  .halign .on { background: #da860c; }
  .styled { margin-bottom: 13px; }
  .dim { color: #777; }
  .dim input, .dim .pick { opacity: .5; }
  .more { width: 100%; height: 15px; justify-content: center; padding-left: 12px; background: #464646; border-top: 1px solid #333; position: relative; }
  .checked { top: 444px; right: -3px; width: 418px; height: 43px; }

  footer { display: flex; grid-row: 7; overflow: hidden; }
  .anim { margin-right: 138px; }
  .time { background: #2b2b2b; margin-right: 1px; }
  footer .docktab + .docktab + .docktab { margin-left: 0; }
</style>
